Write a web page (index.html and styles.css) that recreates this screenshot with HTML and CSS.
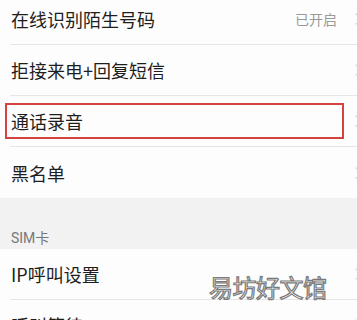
FILE: index.html
```html
<!DOCTYPE html>
<html lang="zh">
<head>
<meta charset="utf-8">
<link rel="stylesheet" href="styles.css">
</head>
<body>
<div class="screen">
  <div class="list">
    <div class="row">
      <span class="label">在线识别陌生号码</span>
      <span class="value">已开启</span>
      <span class="chev"></span>
    </div>
    <div class="row">
      <span class="label">拒接来电+回复短信</span>
      <span class="chev"></span>
    </div>
    <div class="row highlighted">
      <span class="label">通话录音</span>
      <span class="chev"></span>
      <span class="mark"></span>
    </div>
    <div class="row last">
      <span class="label">黑名单</span>
      <span class="chev"></span>
    </div>
  </div>
  <div class="section">SIM卡</div>
  <div class="list">
    <div class="row">
      <span class="label">IP呼叫设置</span>
      <span class="chev"></span>
    </div>
    <div class="row">
      <span class="label">呼叫等待</span>
      <span class="chev"></span>
    </div>
  </div>
  <div class="watermark">易坊好文馆</div>
</div>
</body>
</html>
```
FILE: styles.css
```css
html, body {
  margin: 0;
  padding: 0;
  background: #ffffff;
  overflow: hidden;
}
.screen {
  position: relative;
  width: 357px;
  height: 320px;
  overflow: hidden;
  font-family: "Noto Sans CJK SC", "Noto Sans", sans-serif;
}
.list {
  background: #fdfdfd;
}
.list:first-child {
  margin-top: -6px;
}
.row {
  position: relative;
  display: flex;
  align-items: center;
  height: 50px;
  margin-left: 10px;
  padding-left: 1px;
  border-bottom: 1px solid #e6e6e6;
}
.row.last {
  border-bottom: none;
  height: 51px;
}
.label {
  flex: 1;
  font-size: 18px;
  color: #1e1e1e;
}
.value {
  font-size: 14px;
  color: #9a9a9a;
  margin-right: 15px;
}
.chev {
  width: 7px;
  height: 7px;
  border-top: 1.5px solid #cfcfcf;
  border-right: 1.5px solid #cfcfcf;
  transform: rotate(45deg);
  margin-right: -3px;
}
.mark {
  position: absolute;
  left: -5px;
  top: 7px;
  width: 335px;
  height: 32px;
  border: 2.5px solid #d4433f;
}
.section {
  height: 51px;
  box-sizing: border-box;
  background: #f2f2f2;
  padding: 30px 0 0 11px;
  font-size: 14px;
  line-height: 20px;
  color: #777;
  font-family: "Roboto", "Noto Sans CJK SC", sans-serif;
}
.watermark {
  position: absolute;
  left: 209px;
  top: 272px;
  font-size: 24px;
  line-height: 30px;
  color: #ffffff;
  -webkit-text-stroke: 1.2px #7a7a7a;
  letter-spacing: -0.5px;
}
```
